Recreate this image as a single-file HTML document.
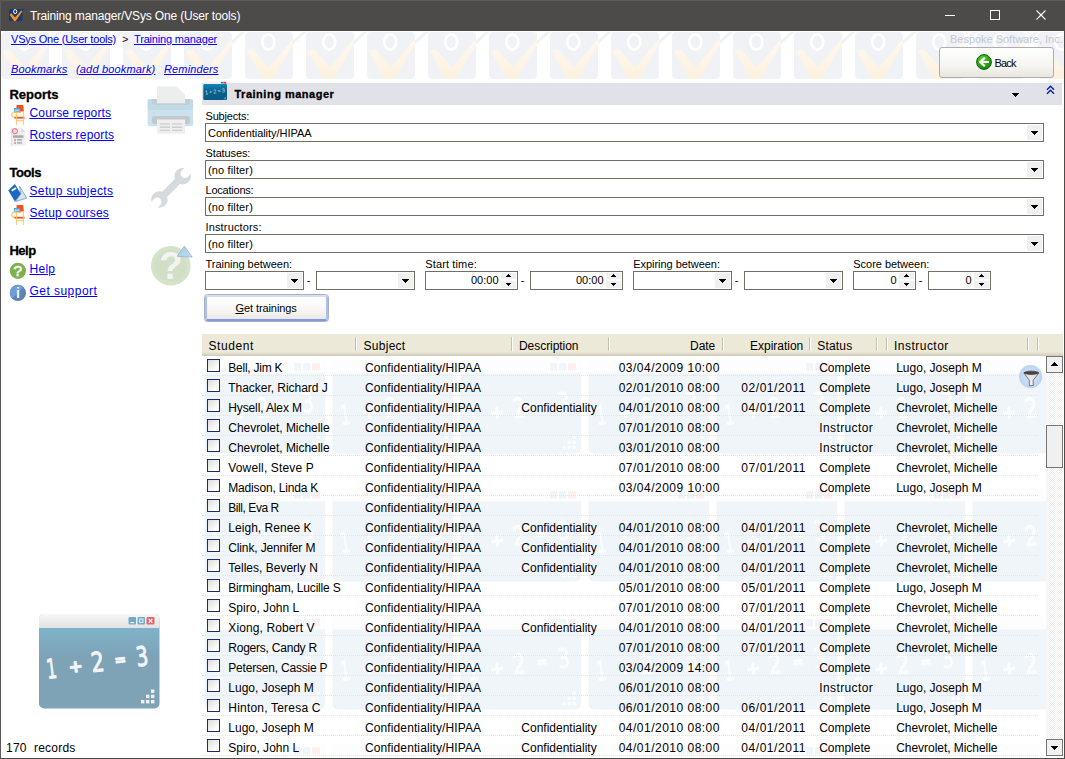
<!DOCTYPE html><html><head><meta charset="utf-8"><title>Training manager/VSys One (User tools)</title><style>
html,body{margin:0;padding:0}
body{width:1065px;height:759px;overflow:hidden;background:#fff;font-family:"Liberation Sans",sans-serif;font-size:11px;color:#000;position:relative;line-height:1}
.a{position:absolute;white-space:nowrap;line-height:1}
.b{font-weight:bold;-webkit-text-stroke:0.3px #000}
.l{color:#00f;text-decoration:underline}
.i{font-style:italic}
.cb{position:absolute;box-sizing:border-box;border:1px solid #716f64;background:#fff;height:19px}
.cb i{position:absolute;right:1px;top:1px;width:15px;height:15px;background:#f0f0f0}
.cb i:after,.dn{content:"";position:absolute;left:4px;top:6px;width:7px;height:4px;background:#000;clip-path:polygon(0 0,7px 0,7px 1px,6px 1px,6px 2px,5px 2px,5px 3px,4px 3px,4px 4px,3px 4px,3px 3px,2px 3px,2px 2px,1px 2px,1px 1px,0 1px)}
.up{position:absolute;width:7px;height:4px;background:#000;clip-path:polygon(3px 0,4px 0,4px 1px,5px 1px,5px 2px,6px 2px,6px 3px,7px 3px,7px 4px,0 4px,0 3px,1px 3px,1px 2px,2px 2px,2px 1px,3px 1px)}
.sp{position:absolute;box-sizing:border-box;border:1px solid #716f64;background:#fff;height:19px}
.sp i,.sp em{position:absolute;right:1px;top:1px;width:15px;height:6px;background:#f0f0f0}
.sp em{top:9px;height:7px}
.sp i:after{content:"";position:absolute;left:5px;top:1px;width:5px;height:3px;background:#000;clip-path:polygon(2px 0,3px 0,3px 1px,4px 1px,4px 2px,5px 2px,5px 3px,0 3px,0 2px,1px 2px,1px 1px,2px 1px)}
.sp em:after{content:"";position:absolute;left:5px;top:2px;width:5px;height:3px;background:#000;clip-path:polygon(0 0,5px 0,5px 1px,4px 1px,4px 2px,3px 2px,3px 3px,2px 3px,2px 2px,1px 2px,1px 1px,0 1px)}
.sp span{position:absolute;top:2.5px;font-size:11px}
.hs{position:absolute;top:337px;width:1px;height:14px;background:#c6c3b4;box-shadow:1px 0 0 #fff}
.row{position:absolute;left:202px;width:836px;height:20px;font-size:12px}
.row:after{content:"";position:absolute;left:0;right:0;top:19px;border-top:1px dotted #e4e4e4}
.row span{position:absolute;top:5.5px;white-space:nowrap}
.row b{position:absolute;left:5px;top:3px;width:13px;height:13px;box-sizing:border-box;border:1px solid #1c2b6e;background:linear-gradient(135deg,#dcdcd8,#fff 80%)}
</style></head><body>
<svg class="a" style="left:1px;top:31px" width="1063" height="50" viewBox="0 0 1063 50">
<defs><linearGradient id="vg" gradientUnits="userSpaceOnUse" x1="0" y1="8" x2="0" y2="47"><stop offset="0" stop-color="#fdf8f0"/><stop offset="1" stop-color="#fcf1dd"/></linearGradient><pattern id="vt" x="0" y="1" width="61" height="60" patternUnits="userSpaceOnUse">
<rect x="0" y="0" width="48" height="47" rx="4" fill="#f0f2f5"/>
<polygon points="1.6,19 8.2,17 24,35.5 46,9 48,8.5 48,12.5 27.5,47 17.4,47" fill="url(#vg)"/>
<ellipse cx="23.3" cy="10" rx="6" ry="7.6" fill="none" stroke="#fff" stroke-width="2.6"/>
<polygon points="48,8.5 58,-1 61,-1 61,0.5 48,12.5" fill="#f0f2f5"/>
</pattern></defs>
<rect x="0" y="0" width="1063" height="50" fill="url(#vt)"/></svg>
<div class="a" style="left:0;top:0;width:1065px;height:31px;background:#4d4b49;border-top:1px solid #5c5b59;border-left:1px solid #5c5b59;box-sizing:border-box"></div>
<svg class="a" style="left:7px;top:6px" width="20" height="18" viewBox="0 0 20 18">
<rect x="2" y="3" width="13.5" height="12" rx="1.5" fill="#1d3a6e"/>
<polygon points="14.5,3.6 17.9,1.7 15.4,5.2" fill="#1d3a6e"/><polygon points="2.6,8.8 4.4,7.3 8.1,11.6 14.1,4.5 15.4,5.3 8.7,15 7.1,15" fill="#f7941d"/>
<ellipse cx="8.2" cy="5.6" rx="1.6" ry="2" fill="none" stroke="#fff" stroke-width="1"/></svg>
<div class="a" style="left:30px;top:10px;font-size:12px;color:#fff;letter-spacing:-0.16px;">Training manager/VSys One (User tools)</div>
<div class="a" style="left:945px;top:15px;width:10px;height:1px;background:#fff"></div>
<div class="a" style="left:990px;top:10px;width:8px;height:8px;border:1px solid #fff"></div>
<svg class="a" style="left:1035px;top:9px" width="12" height="12"><path d="M1.5 1.5L10.5 10.5M10.5 1.5L1.5 10.5" stroke="#fff" stroke-width="1.1" fill="none"/></svg>
<div class="a" style="left:0;top:31px;width:1px;height:728px;background:#5b5a58"></div>
<div class="a" style="left:1064px;top:31px;width:1px;height:728px;background:#4d4b49"></div>
<div class="a" style="left:0;top:758px;width:1065px;height:1px;background:#4d4b49"></div>
<div class="a l" style="left:11px;top:33.5px;font-size:11px;letter-spacing:-0.21px;">VSys One (User tools)</div>
<div class="a" style="left:122px;top:33.5px;font-size:11px;color:#201000">&gt;</div>
<div class="a l" style="left:134px;top:33.5px;font-size:11px;letter-spacing:-0.17px;">Training manager</div>
<div class="a l i" style="left:11px;top:63.5px;font-size:11px;letter-spacing:0.16px;">Bookmarks</div>
<div class="a l i" style="left:76px;top:63.5px;font-size:11px;letter-spacing:0.17px;">(add bookmark)</div>
<div class="a l i" style="left:164px;top:63.5px;font-size:11px;letter-spacing:0.14px;">Reminders</div>
<div class="a" style="left:950px;top:33.5px;font-size:11px;color:#c3c8d3;letter-spacing:-0.02px;">Bespoke Software, Inc.</div>
<div class="a" style="left:939px;top:47px;width:115px;height:31px;box-sizing:border-box;border:1px solid #adadad;border-radius:3px;background:linear-gradient(#fff,#f6f5f1 60%,#e9e6df)"></div>
<svg class="a" style="left:976px;top:54px" width="16" height="16" viewBox="0 0 16 16">
<defs><radialGradient id="gb" cx="0.4" cy="0.3" r="0.8"><stop offset="0" stop-color="#5ed22f"/><stop offset="1" stop-color="#0a7a0a"/></radialGradient></defs>
<circle cx="8" cy="8" r="7.4" fill="url(#gb)" stroke="#0a620a" stroke-width="1"/>
<path d="M13 8H4.5M8.8 3.8L4.3 8L8.8 12.2" stroke="#fff" stroke-width="2.2" fill="none" stroke-linejoin="miter"/></svg>
<div class="a" style="left:994.5px;top:57.5px;font-size:11px;letter-spacing:-0.82px;">Back</div>
<div class="a b" style="left:9.5px;top:88px;font-size:13px;letter-spacing:-0.02px;">Reports</div>
<div class="a l" style="left:29.5px;top:106.5px;font-size:12px;letter-spacing:0.17px;">Course reports</div>
<div class="a l" style="left:29.5px;top:128.5px;font-size:12px;letter-spacing:0.18px;">Rosters reports</div>
<div class="a b" style="left:9.5px;top:165.5px;font-size:13px;letter-spacing:-0.45px;">Tools</div>
<div class="a l" style="left:29.5px;top:184.5px;font-size:12px;letter-spacing:0.37px;">Setup subjects</div>
<div class="a l" style="left:29.5px;top:206.5px;font-size:12px;letter-spacing:0.22px;">Setup courses</div>
<div class="a b" style="left:9.5px;top:243.5px;font-size:13px;letter-spacing:-0.52px;">Help</div>
<div class="a l" style="left:29.5px;top:262.5px;font-size:12px;letter-spacing:0.27px;">Help</div>
<div class="a l" style="left:29.5px;top:284.5px;font-size:12px;letter-spacing:0.46px;">Get support</div>
<svg class="a" style="left:10px;top:104px" width="16" height="22" viewBox="0 0 16 22">
<polygon points="6.6,1 13.2,1 13.9,7.6 6.2,7.6" fill="#f4511e"/>
<rect x="3.9" y="4" width="6" height="3.6" fill="#42a5f5"/><rect x="4.6" y="5.6" width="4.8" height="1" fill="#e8f3fc"/>
<path d="M11 8.3H3.2A2.2 2.6 0 0 0 3.2 13.2H5" fill="none" stroke="#f9a825" stroke-width="0.9"/>
<rect x="4.5" y="12.8" width="10" height="1.8" fill="#f4511e"/>
<path d="M6.4 8.5V21M13.3 7.6V21M6.4 16.7H13.3" stroke="#fbc46a" stroke-width="1" fill="none"/></svg>
<svg class="a" style="left:10px;top:204px" width="16" height="22" viewBox="0 0 16 22">
<polygon points="6.6,1 13.2,1 13.9,7.6 6.2,7.6" fill="#f4511e"/>
<rect x="3.9" y="4" width="6" height="3.6" fill="#42a5f5"/><rect x="4.6" y="5.6" width="4.8" height="1" fill="#e8f3fc"/>
<path d="M11 8.3H3.2A2.2 2.6 0 0 0 3.2 13.2H5" fill="none" stroke="#f9a825" stroke-width="0.9"/>
<rect x="4.5" y="12.8" width="10" height="1.8" fill="#f4511e"/>
<path d="M6.4 8.5V21M13.3 7.6V21M6.4 16.7H13.3" stroke="#fbc46a" stroke-width="1" fill="none"/></svg>
<svg class="a" style="left:10px;top:127px" width="17" height="20" viewBox="0 0 17 20">
<path d="M1.1 1H11.5L15.6 5.1V18.8H1.1Z" fill="#efefef"/><path d="M11.5 1L15.6 5.1H11.5Z" fill="#dcdcdc"/>
<path d="M1.3 1V18.8" stroke="#cfcfcf" stroke-width="0.6"/>
<circle cx="4.9" cy="4.2" r="2.6" fill="#f6d5db" stroke="#e4607a" stroke-width="0.9"/>
<rect x="3" y="8.3" width="10.5" height="2.5" fill="#a9a9a9"/>
<rect x="4" y="12.3" width="2" height="1.5" fill="#e88096"/><rect x="7" y="12.4" width="5" height="1" fill="#888"/>
<rect x="4" y="15.3" width="2" height="1.5" fill="#e88096"/><rect x="7" y="15.4" width="5" height="1" fill="#888"/></svg>
<svg class="a" style="left:7px;top:182px" width="21" height="22" viewBox="0 0 21 22">
<polygon points="12.5,4.2 19.7,16.1 8.5,19.6 13.8,11.8" fill="#d4e4f0" stroke="#3b5f94" stroke-width="0.5"/>
<polygon points="7.9,1.9 13.8,11.8 7.9,19.4 1.3,8.5" fill="#1b6ac0"/>
<polygon points="4.2,7.9 8.5,5.2 9.5,6.8 5.2,9.5" fill="#fff"/></svg>
<svg class="a" style="left:9px;top:262px" width="18" height="18" viewBox="0 0 18 18"><circle cx="8.9" cy="8.8" r="8.1" fill="#7fb04f"/>
<text x="8.9" y="14.3" text-anchor="middle" font-family="Liberation Sans,sans-serif" font-size="15.5" fill="#fff" stroke="#fff" stroke-width="0.5">?</text></svg>
<svg class="a" style="left:9px;top:284px" width="18" height="18" viewBox="0 0 18 18"><circle cx="8.9" cy="8.9" r="8.1" fill="#5b84b1"/>
<path d="M0.8 8.9A8.1 8.1 0 0 1 14.6 3.2L3.2 14.6A8.1 8.1 0 0 1 .8 8.9Z" fill="#6f9fd8"/>
<text x="8.9" y="14.2" text-anchor="middle" font-family="Liberation Sans,sans-serif" font-weight="bold" font-size="14.5" fill="#f4f4f4">i</text></svg>
<svg class="a" style="left:146px;top:85px" width="49" height="50" viewBox="0 0 49 50">
<rect x="1.7" y="14" width="45.4" height="27.2" rx="2.5" fill="#c9e2ee"/>
<rect x="1.7" y="14" width="45.4" height="11" rx="2.5" fill="#bfdbe8"/>
<path d="M6 14H44V17A3 3 0 0 1 41 20H9A3 3 0 0 1 6 17Z" fill="#c4cdd3"/>
<path d="M11 1.2H30.5L39 9.8V18.3H11Z" fill="#eceeee"/>
<rect x="6" y="31" width="38" height="8" rx="3" fill="#c3c8cc"/>
<rect x="11" y="34.5" width="28" height="14.3" fill="#efefef"/>
<path d="M13.8 39H24M26 39H36.3M13.8 42.1H24M26 42.1H36.3M13.8 45.3H24M26 45.3H36.3" stroke="#c6c6c8" stroke-width="1.1"/>
<rect x="4.4" y="27.5" width="1.3" height="1.3" fill="#f3e3a8"/><rect x="7" y="27.5" width="1.3" height="1.3" fill="#f0b8c4"/></svg>
<svg class="a" style="left:146px;top:163px" width="50" height="50" viewBox="0 0 50 50">
<g fill="#d5dade" stroke="none"><circle cx="36.7" cy="13.2" r="8.3"/><circle cx="13.4" cy="36.5" r="8.3"/></g>
<path d="M13.4 36.5L36.7 13.2" stroke="#d5dade" stroke-width="7.2"/>
<path d="M38.9 10.8L48 1" stroke="#fff" stroke-width="8.6" stroke-linecap="round"/>
<path d="M11.2 38.9L2 48.5" stroke="#fff" stroke-width="8.6" stroke-linecap="round"/></svg>
<svg class="a" style="left:146px;top:241px" width="50" height="50" viewBox="0 0 50 50">
<circle cx="24.8" cy="24.8" r="19.8" fill="#d4e3ca"/><circle cx="24.8" cy="24.8" r="16" fill="#d0dfc6"/>
<text x="24.8" y="38.2" text-anchor="middle" font-family="Liberation Sans,sans-serif" font-weight="bold" font-size="38" fill="#f3f4f2">?</text>
<defs><linearGradient id="tg" x1="0" y1="0" x2="1" y2="1"><stop offset="0" stop-color="#a6d0d8"/><stop offset="1" stop-color="#bcd8f2"/></linearGradient></defs>
<polygon points="38.3,5.1 46.2,16.1 31.2,15.3" fill="url(#tg)" stroke="#93a6da" stroke-width="0.7"/></svg>
<svg class="a" style="left:38px;top:613px" width="124" height="97" viewBox="0 0 124 97">
<defs><linearGradient id="cg" x1="0" y1="0" x2="0" y2="1"><stop offset="0" stop-color="#7fbad2"/><stop offset="0.45" stop-color="#7ea3b7"/><stop offset="1" stop-color="#7ea3b7"/></linearGradient>
<linearGradient id="ct" x1="0" y1="0" x2="0" y2="1"><stop offset="0" stop-color="#f7f7f7"/><stop offset="1" stop-color="#e2e2e2"/></linearGradient></defs>
<rect x="1" y="1" width="120.5" height="94.5" rx="5" fill="url(#cg)"/>
<path d="M1 15V6A5 5 0 0 1 6 1H116.5A5 5 0 0 1 121.5 6V15Z" fill="url(#ct)"/>
<rect x="90.5" y="4" width="7.5" height="7.5" rx="1" fill="#73abc5"/><rect x="92.5" y="9" width="3.5" height="1.2" fill="#fff"/>
<rect x="99.5" y="4" width="7.5" height="7.5" rx="1" fill="#73abc5"/><rect x="101.7" y="6" width="3.2" height="3.4" fill="none" stroke="#e8f2f7" stroke-width="1"/>
<rect x="108.5" y="4" width="8" height="7.5" rx="1" fill="#e8666b"/><path d="M110.7 5.8L114.3 9.8M114.3 5.8L110.7 9.8" stroke="#fff" stroke-width="1.2"/>
<g font-family="DejaVu Sans,Liberation Sans,sans-serif" fill="#f2f5f7" stroke="#f2f5f7" stroke-width="1.1" stroke-linejoin="round"><text x="9.7" y="65.8" font-size="27" transform="rotate(-7 9.7 65.8)" textLength="10" lengthAdjust="spacingAndGlyphs">1</text><text x="31.3" y="60" font-size="17" transform="rotate(-7 31.3 60)" font-weight="bold">+</text><text x="54.2" y="59.3" font-size="27" transform="rotate(-7 54.2 59.3)" textLength="13" lengthAdjust="spacingAndGlyphs">2</text><text x="77" y="52.3" font-size="14" transform="rotate(-7 77 52.3)" font-weight="bold">=</text><text x="99.3" y="53.5" font-size="27" transform="rotate(-7 99.3 53.5)" textLength="12" lengthAdjust="spacingAndGlyphs">3</text></g>
<g fill="#f1f1f1"><rect x="113" y="76.5" width="3.4" height="3.4"/><rect x="108" y="81.7" width="3.4" height="3.4"/><rect x="113" y="81.7" width="3.4" height="3.4"/>
<rect x="103" y="87" width="3.4" height="3.4"/><rect x="108" y="87" width="3.4" height="3.4"/><rect x="113" y="87" width="3.4" height="3.4"/></g></svg>
<div class="a" style="left:6px;top:741.5px;font-size:12px;letter-spacing:0.24px;">170&nbsp; records</div>
<div class="a" style="left:202px;top:83px;width:860px;height:22px;background:#e1e1e8"></div>
<svg class="a" style="left:203px;top:81px" width="25" height="20" viewBox="0 0 25 20">
<defs><linearGradient id="ig" x1="0" y1="0" x2="0" y2="1"><stop offset="0" stop-color="#1186b6"/><stop offset="0.5" stop-color="#0b5d8b"/><stop offset="1" stop-color="#0b5a87"/></linearGradient></defs>
<rect x="0.3" y="0.5" width="23.2" height="3" fill="#f4f1ef"/>
<rect x="17.9" y="0.9" width="2.8" height="1.6" fill="#1878a8"/><rect x="21" y="0.8" width="2.3" height="1.9" fill="#e8383c"/>
<rect x="0.3" y="3" width="23.7" height="16" rx="1" fill="url(#ig)"/>
<text x="1.8" y="12.3" font-family="Liberation Sans,sans-serif" font-size="5.5" fill="#cfe3ee" textLength="20" transform="rotate(-7 12 10)">1+2=3</text>
<polygon points="20.3,18.3 23,15.3 23,18.3" fill="#5f93b3"/></svg>
<div class="a b" style="left:234.5px;top:88.5px;font-size:11px;letter-spacing:0.51px;">Training manager</div>
<div class="dn" style="left:1012px;top:93px"></div>
<svg class="a" style="left:1046px;top:85px" width="10" height="10"><path d="M1 4.8L4.5 1.3L8 4.8M1 8.8L4.5 5.3L8 8.8" stroke="#0020a8" stroke-width="1.4" fill="none"/></svg>
<div class="a" style="left:205.5px;top:110.5px;font-size:11px;letter-spacing:-0.18px;">Subjects:</div>
<div class="cb" style="left:205px;top:123px;width:839px"><i></i></div>
<div class="a" style="left:208px;top:127.5px;font-size:11px;letter-spacing:-0.04px;">Confidentiality/HIPAA</div>
<div class="a" style="left:205.5px;top:147.5px;font-size:11px;letter-spacing:-0.13px;">Statuses:</div>
<div class="cb" style="left:205px;top:160px;width:839px"><i></i></div>
<div class="a" style="left:208px;top:164.5px;font-size:11px;letter-spacing:0.14px;">(no filter)</div>
<div class="a" style="left:205.5px;top:184.5px;font-size:11px;letter-spacing:-0.22px;">Locations:</div>
<div class="cb" style="left:205px;top:197px;width:839px"><i></i></div>
<div class="a" style="left:208px;top:201.5px;font-size:11px;letter-spacing:0.14px;">(no filter)</div>
<div class="a" style="left:205.5px;top:221.5px;font-size:11px;letter-spacing:0.15px;">Instructors:</div>
<div class="cb" style="left:205px;top:234px;width:839px"><i></i></div>
<div class="a" style="left:208px;top:238.5px;font-size:11px;letter-spacing:0.14px;">(no filter)</div>
<div class="a" style="left:205.5px;top:258.5px;font-size:11px;letter-spacing:-0.03px;">Training between:</div>
<div class="a" style="left:425.3px;top:258.5px;font-size:11px;letter-spacing:0.13px;">Start time:</div>
<div class="a" style="left:633.3px;top:258.5px;font-size:11px;letter-spacing:-0.05px;">Expiring between:</div>
<div class="a" style="left:853.3px;top:258.5px;font-size:11px;letter-spacing:-0.03px;">Score between:</div>
<div class="cb" style="left:205px;top:271px;width:99px"><i></i></div>
<div class="cb" style="left:316px;top:271px;width:99px"><i></i></div>
<div class="cb" style="left:633px;top:271px;width:99px"><i></i></div>
<div class="cb" style="left:744px;top:271px;width:99px"><i></i></div>
<div class="a" style="left:306.8px;top:275px;font-size:11px;">-</div>
<div class="a" style="left:520.8px;top:275px;font-size:11px;">-</div>
<div class="a" style="left:734.8px;top:275px;font-size:11px;">-</div>
<div class="a" style="left:918.8px;top:275px;font-size:11px;">-</div>
<div class="sp" style="left:425px;top:271px;width:93px"><span style="right:18.5px">00:00</span><i></i><em></em></div>
<div class="sp" style="left:530px;top:271px;width:93px"><span style="right:18.5px">00:00</span><i></i><em></em></div>
<div class="sp" style="left:853px;top:271px;width:63px"><span style="right:18.5px">0</span><i></i><em></em></div>
<div class="sp" style="left:928px;top:271px;width:63px"><span style="right:18.5px">0</span><i></i><em></em></div>
<div class="a" style="left:204px;top:294px;width:125px;height:28px;box-sizing:border-box;border:1px solid #aeb0b8;border-radius:3.5px;background:#fff"><div style="position:absolute;left:0;top:0;right:0;bottom:0;box-sizing:border-box;border:2px solid;border-color:#d3dffa #a9bef6 #7f98ee #a9bef6;border-radius:2.5px;background:linear-gradient(#fff,#f7f6f3 60%,#ebe8e2)"></div></div>
<div class="a" style="left:235.5px;top:302.5px;font-size:11px;letter-spacing:-0.09px;"><u>G</u>et trainings</div>
<svg class="a" style="left:202px;top:356px" width="844" height="400" viewBox="202 356 844 400">
<defs><pattern id="wm" x="204" y="360" width="128" height="128" patternUnits="userSpaceOnUse">
<rect x="0.5" y="0" width="120.5" height="93.5" rx="5" fill="#f0f5f9"/>
<path d="M.5 13.5V5A5 5 0 0 1 5.5 0H116A5 5 0 0 1 121 5V13.5Z" fill="#fdfdfd"/>
<rect x="90" y="3" width="7.5" height="7.5" rx="1" fill="#f0f5f9"/><rect x="99" y="3" width="7.5" height="7.5" rx="1" fill="#f0f5f9"/><rect x="108" y="3" width="8" height="7.5" rx="1" fill="#fdf0f1"/>
<g font-family="DejaVu Sans,Liberation Sans,sans-serif" fill="#fbfdfe" stroke="#fbfdfe" stroke-width="1.1" stroke-linejoin="round"><text x="9.2" y="64.8" font-size="27" transform="rotate(-7 9.2 64.8)" textLength="10" lengthAdjust="spacingAndGlyphs">1</text><text x="30.8" y="59" font-size="17" transform="rotate(-7 30.8 59)" font-weight="bold">+</text><text x="53.7" y="58.3" font-size="27" transform="rotate(-7 53.7 58.3)" textLength="13" lengthAdjust="spacingAndGlyphs">2</text><text x="76.5" y="51.3" font-size="14" transform="rotate(-7 76.5 51.3)" font-weight="bold">=</text><text x="98.8" y="52.5" font-size="27" transform="rotate(-7 98.8 52.5)" textLength="12" lengthAdjust="spacingAndGlyphs">3</text></g>
<g fill="#fdfdfe"><rect x="112.5" y="75.5" width="3.4" height="3.4"/><rect x="107.5" y="80.7" width="3.4" height="3.4"/><rect x="112.5" y="80.7" width="3.4" height="3.4"/>
<rect x="102.5" y="86" width="3.4" height="3.4"/><rect x="107.5" y="86" width="3.4" height="3.4"/><rect x="112.5" y="86" width="3.4" height="3.4"/></g>
</pattern></defs><rect x="202" y="356" width="844" height="400" fill="url(#wm)"/></svg>
<div class="a" style="left:202px;top:334px;width:861px;height:22px;background:linear-gradient(#ece9d8 0,#ece9d8 18px,#e2dfcc 19px,#d6d2c2 21px,#cbc7b8 22px)"></div>
<div class="hs" style="left:355px"></div>
<div class="hs" style="left:511px"></div>
<div class="hs" style="left:608px"></div>
<div class="hs" style="left:722px"></div>
<div class="hs" style="left:809px"></div>
<div class="hs" style="left:876px"></div>
<div class="hs" style="left:886px"></div>
<div class="hs" style="left:1027px"></div>
<div class="hs" style="left:1037px"></div>
<div class="a" style="left:208.5px;top:339.5px;font-size:12px;letter-spacing:0.57px;">Student</div>
<div class="a" style="left:363.5px;top:339.5px;font-size:12px;letter-spacing:0.28px;">Subject</div>
<div class="a" style="left:519px;top:339.5px;font-size:12px;letter-spacing:-0.05px;">Description</div>
<div class="a" style="left:690px;top:339.5px;font-size:12px;letter-spacing:-0.02px;">Date</div>
<div class="a" style="left:750px;top:339.5px;font-size:12px;letter-spacing:-0.01px;">Expiration</div>
<div class="a" style="left:817.3px;top:339.5px;font-size:12px;letter-spacing:0.17px;">Status</div>
<div class="a" style="left:894px;top:339.5px;font-size:12px;letter-spacing:0.48px;">Instructor</div>
<div class="row" style="top:356px"><b></b><span style="left:26.3px;letter-spacing:-0.24px;">Bell, Jim K</span><span style="left:163px;letter-spacing:0.11px;">Confidentiality/HIPAA</span><span style="left:416.7px;letter-spacing:0.49px;">03/04/2009 10:00</span><span style="left:617.2px;letter-spacing:-0.02px;">Complete</span><span style="left:694.2px;letter-spacing:0.01px;">Lugo, Joseph M</span></div>
<div class="row" style="top:376px"><b></b><span style="left:26.3px;letter-spacing:-0.04px;">Thacker, Richard J</span><span style="left:163px;letter-spacing:0.11px;">Confidentiality/HIPAA</span><span style="left:416.7px;letter-spacing:0.49px;">02/01/2010 08:00</span><span style="left:539.3px;letter-spacing:0.55px;">02/01/2011</span><span style="left:617.2px;letter-spacing:-0.02px;">Complete</span><span style="left:694.2px;letter-spacing:0.01px;">Lugo, Joseph M</span></div>
<div class="row" style="top:396px"><b></b><span style="left:26.3px;letter-spacing:-0.13px;">Hysell, Alex M</span><span style="left:163px;letter-spacing:0.11px;">Confidentiality/HIPAA</span><span style="left:319.3px;letter-spacing:0px;">Confidentiality</span><span style="left:416.7px;letter-spacing:0.49px;">04/01/2010 08:00</span><span style="left:539.3px;letter-spacing:0.55px;">04/01/2011</span><span style="left:617.2px;letter-spacing:-0.02px;">Complete</span><span style="left:694.2px;letter-spacing:-0.04px;">Chevrolet, Michelle</span></div>
<div class="row" style="top:416px"><b></b><span style="left:26.3px;letter-spacing:-0.04px;">Chevrolet, Michelle</span><span style="left:163px;letter-spacing:0.11px;">Confidentiality/HIPAA</span><span style="left:416.7px;letter-spacing:0.49px;">07/01/2010 08:00</span><span style="left:617.2px;letter-spacing:0.4px;">Instructor</span><span style="left:694.2px;letter-spacing:-0.04px;">Chevrolet, Michelle</span></div>
<div class="row" style="top:436px"><b></b><span style="left:26.3px;letter-spacing:-0.04px;">Chevrolet, Michelle</span><span style="left:163px;letter-spacing:0.11px;">Confidentiality/HIPAA</span><span style="left:416.7px;letter-spacing:0.49px;">03/01/2010 08:00</span><span style="left:617.2px;letter-spacing:0.4px;">Instructor</span><span style="left:694.2px;letter-spacing:-0.04px;">Chevrolet, Michelle</span></div>
<div class="row" style="top:456px"><b></b><span style="left:26.3px;letter-spacing:0.15px;">Vowell, Steve P</span><span style="left:163px;letter-spacing:0.11px;">Confidentiality/HIPAA</span><span style="left:416.7px;letter-spacing:0.49px;">07/01/2010 08:00</span><span style="left:539.3px;letter-spacing:0.55px;">07/01/2011</span><span style="left:617.2px;letter-spacing:-0.02px;">Complete</span><span style="left:694.2px;letter-spacing:-0.04px;">Chevrolet, Michelle</span></div>
<div class="row" style="top:476px"><b></b><span style="left:26.3px;letter-spacing:-0.18px;">Madison, Linda K</span><span style="left:163px;letter-spacing:0.11px;">Confidentiality/HIPAA</span><span style="left:416.7px;letter-spacing:0.49px;">03/04/2009 10:00</span><span style="left:617.2px;letter-spacing:-0.02px;">Complete</span><span style="left:694.2px;letter-spacing:0.01px;">Lugo, Joseph M</span></div>
<div class="row" style="top:496px"><b></b><span style="left:26.3px;letter-spacing:-0.44px;">Bill, Eva R</span><span style="left:163px;letter-spacing:0.11px;">Confidentiality/HIPAA</span></div>
<div class="row" style="top:516px"><b></b><span style="left:26.3px;letter-spacing:0.04px;">Leigh, Renee K</span><span style="left:163px;letter-spacing:0.11px;">Confidentiality/HIPAA</span><span style="left:319.3px;letter-spacing:0px;">Confidentiality</span><span style="left:416.7px;letter-spacing:0.49px;">04/01/2010 08:00</span><span style="left:539.3px;letter-spacing:0.55px;">04/01/2011</span><span style="left:617.2px;letter-spacing:-0.02px;">Complete</span><span style="left:694.2px;letter-spacing:-0.04px;">Chevrolet, Michelle</span></div>
<div class="row" style="top:536px"><b></b><span style="left:26.3px;letter-spacing:-0.14px;">Clink, Jennifer M</span><span style="left:163px;letter-spacing:0.11px;">Confidentiality/HIPAA</span><span style="left:319.3px;letter-spacing:0px;">Confidentiality</span><span style="left:416.7px;letter-spacing:0.49px;">04/01/2010 08:00</span><span style="left:539.3px;letter-spacing:0.55px;">04/01/2011</span><span style="left:617.2px;letter-spacing:-0.02px;">Complete</span><span style="left:694.2px;letter-spacing:-0.04px;">Chevrolet, Michelle</span></div>
<div class="row" style="top:556px"><b></b><span style="left:26.3px;letter-spacing:0.01px;">Telles, Beverly N</span><span style="left:163px;letter-spacing:0.11px;">Confidentiality/HIPAA</span><span style="left:319.3px;letter-spacing:0px;">Confidentiality</span><span style="left:416.7px;letter-spacing:0.49px;">04/01/2010 08:00</span><span style="left:539.3px;letter-spacing:0.55px;">04/01/2011</span><span style="left:617.2px;letter-spacing:-0.02px;">Complete</span><span style="left:694.2px;letter-spacing:-0.04px;">Chevrolet, Michelle</span></div>
<div class="row" style="top:576px"><b></b><span style="left:26.3px;letter-spacing:-0.18px;">Birmingham, Lucille S</span><span style="left:163px;letter-spacing:0.11px;">Confidentiality/HIPAA</span><span style="left:416.7px;letter-spacing:0.49px;">05/01/2010 08:00</span><span style="left:539.3px;letter-spacing:0.55px;">05/01/2011</span><span style="left:617.2px;letter-spacing:-0.02px;">Complete</span><span style="left:694.2px;letter-spacing:0.01px;">Lugo, Joseph M</span></div>
<div class="row" style="top:596px"><b></b><span style="left:26.3px;letter-spacing:0.02px;">Spiro, John L</span><span style="left:163px;letter-spacing:0.11px;">Confidentiality/HIPAA</span><span style="left:416.7px;letter-spacing:0.49px;">07/01/2010 08:00</span><span style="left:539.3px;letter-spacing:0.55px;">07/01/2011</span><span style="left:617.2px;letter-spacing:-0.02px;">Complete</span><span style="left:694.2px;letter-spacing:-0.04px;">Chevrolet, Michelle</span></div>
<div class="row" style="top:616px"><b></b><span style="left:26.3px;letter-spacing:0.11px;">Xiong, Robert V</span><span style="left:163px;letter-spacing:0.11px;">Confidentiality/HIPAA</span><span style="left:319.3px;letter-spacing:0px;">Confidentiality</span><span style="left:416.7px;letter-spacing:0.49px;">04/01/2010 08:00</span><span style="left:539.3px;letter-spacing:0.55px;">04/01/2011</span><span style="left:617.2px;letter-spacing:-0.02px;">Complete</span><span style="left:694.2px;letter-spacing:-0.04px;">Chevrolet, Michelle</span></div>
<div class="row" style="top:636px"><b></b><span style="left:26.3px;letter-spacing:-0.23px;">Rogers, Candy R</span><span style="left:163px;letter-spacing:0.11px;">Confidentiality/HIPAA</span><span style="left:416.7px;letter-spacing:0.49px;">07/01/2010 08:00</span><span style="left:539.3px;letter-spacing:0.55px;">07/01/2011</span><span style="left:617.2px;letter-spacing:-0.02px;">Complete</span><span style="left:694.2px;letter-spacing:-0.04px;">Chevrolet, Michelle</span></div>
<div class="row" style="top:656px"><b></b><span style="left:26.3px;letter-spacing:-0.2px;">Petersen, Cassie P</span><span style="left:163px;letter-spacing:0.11px;">Confidentiality/HIPAA</span><span style="left:416.7px;letter-spacing:0.49px;">03/04/2009 14:00</span><span style="left:617.2px;letter-spacing:-0.02px;">Complete</span></div>
<div class="row" style="top:676px"><b></b><span style="left:26.3px;letter-spacing:0.01px;">Lugo, Joseph M</span><span style="left:163px;letter-spacing:0.11px;">Confidentiality/HIPAA</span><span style="left:416.7px;letter-spacing:0.49px;">06/01/2010 08:00</span><span style="left:617.2px;letter-spacing:0.4px;">Instructor</span><span style="left:694.2px;letter-spacing:0.01px;">Lugo, Joseph M</span></div>
<div class="row" style="top:696px"><b></b><span style="left:26.3px;letter-spacing:0.2px;">Hinton, Teresa C</span><span style="left:163px;letter-spacing:0.11px;">Confidentiality/HIPAA</span><span style="left:416.7px;letter-spacing:0.49px;">06/01/2010 08:00</span><span style="left:539.3px;letter-spacing:0.55px;">06/01/2011</span><span style="left:617.2px;letter-spacing:-0.02px;">Complete</span><span style="left:694.2px;letter-spacing:0.01px;">Lugo, Joseph M</span></div>
<div class="row" style="top:716px"><b></b><span style="left:26.3px;letter-spacing:0.01px;">Lugo, Joseph M</span><span style="left:163px;letter-spacing:0.11px;">Confidentiality/HIPAA</span><span style="left:319.3px;letter-spacing:0px;">Confidentiality</span><span style="left:416.7px;letter-spacing:0.49px;">04/01/2010 08:00</span><span style="left:539.3px;letter-spacing:0.55px;">04/01/2011</span><span style="left:617.2px;letter-spacing:-0.02px;">Complete</span><span style="left:694.2px;letter-spacing:-0.04px;">Chevrolet, Michelle</span></div>
<div class="row" style="top:736px"><b></b><span style="left:26.3px;letter-spacing:0.02px;">Spiro, John L</span><span style="left:163px;letter-spacing:0.11px;">Confidentiality/HIPAA</span><span style="left:319.3px;letter-spacing:0px;">Confidentiality</span><span style="left:416.7px;letter-spacing:0.49px;">04/01/2010 08:00</span><span style="left:539.3px;letter-spacing:0.55px;">04/01/2011</span><span style="left:617.2px;letter-spacing:-0.02px;">Complete</span><span style="left:694.2px;letter-spacing:-0.04px;">Chevrolet, Michelle</span></div>
<div class="a" style="left:1046px;top:356px;width:17px;height:400px;background-color:#fff;background-image:linear-gradient(45deg,#efefef 25%,transparent 25%,transparent 75%,#efefef 75%),linear-gradient(45deg,#efefef 25%,transparent 25%,transparent 75%,#efefef 75%);background-size:2px 2px;background-position:0 0,1px 1px"></div>
<div class="a" style="left:1046px;top:356px;width:17px;height:17px;box-sizing:border-box;border:1px solid #767676;background:#f1f1f1"></div>
<div class="up" style="left:1051px;top:362px"></div>
<div class="a" style="left:1046px;top:425px;width:17px;height:43px;box-sizing:border-box;border:1px solid #767676;background:#f0f0f0"></div>
<div class="a" style="left:1046px;top:739px;width:17px;height:17px;box-sizing:border-box;border:1px solid #767676;background:#f1f1f1"></div>
<div class="dn" style="left:1051px;top:746px"></div>
<svg class="a" style="left:1018px;top:364px" width="26" height="26" viewBox="0 0 26 26">
<defs><radialGradient id="fg" cx="0.5" cy="0.5" r="0.5"><stop offset="0" stop-color="#d6e3f6"/><stop offset="0.7" stop-color="#c6d9f3"/><stop offset="1" stop-color="#b9d3f1"/></radialGradient>
<linearGradient id="fu" x1="0" y1="0" x2="0" y2="1"><stop offset="0" stop-color="#dcdcdc"/><stop offset="1" stop-color="#f6f6f6"/></linearGradient>
<linearGradient id="fe" x1="0" y1="0" x2="0" y2="1"><stop offset="0" stop-color="#7a7a7a"/><stop offset="0.5" stop-color="#3c3c3c"/><stop offset="1" stop-color="#5a5a5a"/></linearGradient></defs>
<circle cx="12.6" cy="12.6" r="11.6" fill="url(#fg)"/>
<path d="M5.8 9L11.3 16.3V21.5H15.2V16.3L20.8 9Z" fill="url(#fu)" stroke="#4a4a4a" stroke-width="0.7"/>
<ellipse cx="13.3" cy="8.7" rx="7.5" ry="2.2" fill="url(#fe)"/></svg>
</body></html>
